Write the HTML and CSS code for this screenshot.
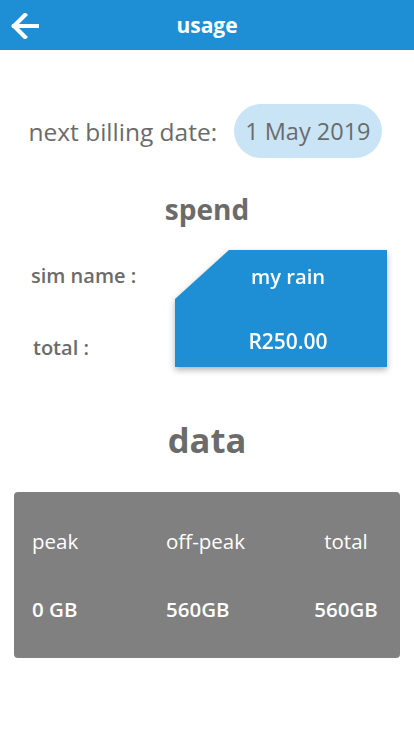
FILE: index.html
```html
<!DOCTYPE html>
<html>
<head>
<meta charset="utf-8">
<link rel="stylesheet" href="styles.css">
</head>
<body>
<header class="topbar">
  <span class="back">
    <svg width="28" height="26" viewBox="0 0 28 26"><path d="M14 2 L3 13 L14 24 M3 13 H27" fill="none" stroke="#fff" stroke-width="4.2" stroke-linecap="square" stroke-linejoin="miter"/></svg>
  </span>
  <h1 class="title">usage</h1>
  <span></span>
</header>
<main>
  <section class="billing">
    <span class="billing-label">next billing date:</span>
    <span class="pill">1 May 2019</span>
  </section>
  <h2 class="spend-title">spend</h2>
  <section class="spend">
    <div class="labels">
      <span class="lbl">sim name :</span>
      <span class="lbl lbl-total">total :</span>
    </div>
    <div class="card-wrap">
      <div class="card">
        <span class="card-name">my rain</span>
        <span class="card-total">R250.00</span>
      </div>
    </div>
  </section>
  <h2 class="data-title">data</h2>
  <section class="databox">
    <span class="cell">peak</span>
    <span class="cell">off-peak</span>
    <span class="cell c3">total</span>
    <span class="cell val">0 GB</span>
    <span class="cell val">560GB</span>
    <span class="cell val c3">560GB</span>
  </section>
</main>
</body>
</html>
```

FILE: styles.css
```css
* { box-sizing: border-box; margin: 0; padding: 0; }
body {
  font-family: "Open Sans", "Noto Sans", sans-serif;
  background: #fff;
  color: #6b6b6b;
  width: 414px;
}
.topbar {
  height: 50px;
  background: #1e8fd4;
  display: grid;
  grid-template-columns: 1fr auto 1fr;
  align-items: center;
}
.back { display: flex; padding-left: 11px; padding-top: 1px; }
.title {
  color: #fff;
  font-size: 21px;
  font-weight: 700;
  line-height: 28px;
}
.billing {
  margin-top: 54px;
  display: flex;
  align-items: center;
  justify-content: center;
  gap: 17px;
  padding-right: 4px;
}
.billing-label { font-size: 24.5px; }
.pill {
  background: #c9e4f5;
  height: 54px;
  border-radius: 27px;
  display: flex;
  align-items: center;
  padding: 0 11px;
  font-size: 23.5px;
}
.spend-title {
  text-align: center;
  font-size: 28px;
  font-weight: 700;
  margin-top: 32px;
  line-height: 38px;
}
.spend {
  margin-top: 22px;
  display: flex;
  justify-content: space-between;
  padding: 0 27px 0 31px;
}
.labels {
  display: flex;
  flex-direction: column;
  padding-top: 12px;
  gap: 45px;
}
.lbl { font-size: 20px; font-weight: 600; line-height: 27px; }
.lbl-total { padding-left: 2px; }
.card-wrap { filter: drop-shadow(0 3px 3px rgba(0,0,0,0.3)); }
.card {
  width: 212px;
  height: 117px;
  background: #1e8fd4;
  clip-path: polygon(54px 0, 100% 0, 100% 100%, 0 100%, 0 49px);
  display: flex;
  flex-direction: column;
  align-items: center;
  padding-left: 14px;
  color: #fff;
  font-weight: 600;
}
.card-name { font-size: 20.2px; line-height: 26px; margin-top: 13px; }
.card-total { font-size: 21px; line-height: 28px; margin-top: 38px; }
.data-title {
  text-align: center;
  font-size: 34.6px;
  font-weight: 700;
  line-height: 48px;
  margin-top: 49px;
}
.databox {
  margin: 28px 14px 0;
  height: 166px;
  background: #808080;
  border-radius: 4px;
  display: grid;
  grid-template-columns: 134px 134px 1fr;
  grid-template-rows: 26px 26px;
  row-gap: 42px;
  align-content: center;
  padding: 0 8px 0 18px;
  color: #fff;
}
.cell { font-size: 20.5px; line-height: 26px; }
.val { font-weight: 600; }
.c3 { text-align: center; }
```
